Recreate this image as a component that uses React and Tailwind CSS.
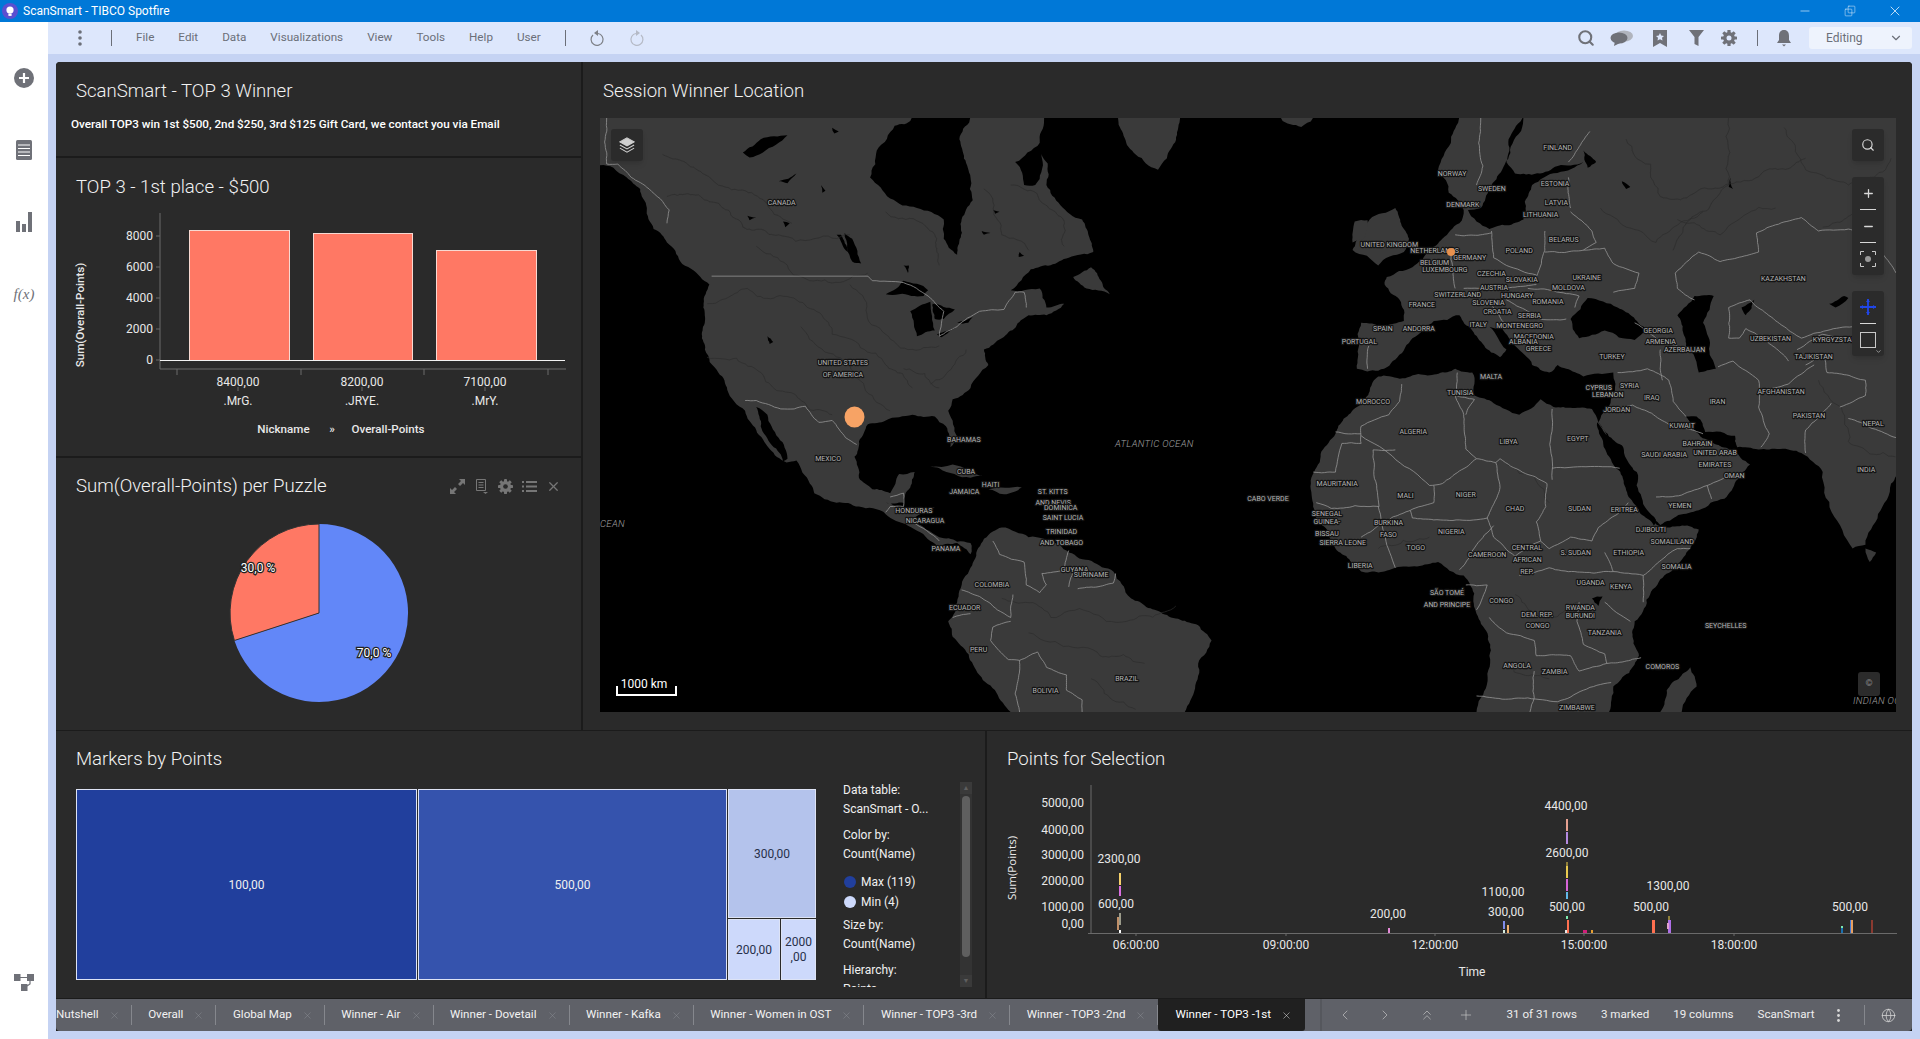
import { ChevronDown, ChevronLeft, ChevronRight, ChevronsUp, Globe, Minus, Plus, Search, Square, X } from 'lucide-react';

const menuItems = [['File', 'ml-[24px]'], ['Edit', 'ml-[24px]'], ['Data', 'ml-[24px]'], ['Visualizations', 'ml-[24px]'], ['View', 'ml-[24px]'], ['Tools', 'ml-[24px]'], ['Help', 'ml-[24px]'], ['User', 'ml-[24px]']];
const tabs = ['Overall', 'Global Map', 'Winner - Air', 'Winner - Dovetail', 'Winner - Kafka', 'Winner - Women in OST', 'Winner - TOP3 -3rd', 'Winner - TOP3 -2nd'];

// coordinates below were read off crops of the map, so each half has its own scale
const westLand = [
  '0,118 30,125 60,150 90,180 105,230 120,285 150,320 180,370 225,410 245,430 232,480 228,560 235,600 265,660 285,705 325,760 350,810 380,860 418,895 440,890 470,950 480,975 530,1000 580,1010 640,1030 690,1060 740,1100 760,1115 800,1105 830,1135 830,1105 800,1102 760,1090 730,1070 700,1040 750,1012 660,1008 640,1000 680,1000 695,960 705,920 670,925 650,975 610,965 580,935 570,880 580,840 600,795 640,785 700,770 750,775 775,800 785,855 802,830 780,760 790,730 830,700 870,640 860,600 900,570 960,510 1000,510 1040,480 1000,490 985,440 950,445 920,445 965,390 1050,360 1105,345 1080,260 1000,170 985,60 995,0 0,0',
  '805,1230 830,1170 880,1075 900,1065 960,1090 1030,1110 1050,1130 1150,1180 1190,1250 1260,1290 1340,1320 1370,1360 1340,1420 1310,1547 920,1547 850,1450 790,1350 780,1310 800,1260',
  '1060,410 1100,385 1142,455 1090,440',
  '1160,0 1300,0 1270,100 1250,130 1200,90',
  '740,905 790,900 860,930 830,935 760,910',
  '870,965 945,960 905,978',
];
const westWater = [
  '605,150 620,80 660,15 700,0 830,0 805,50 830,150 835,210 810,260 800,352 770,310 770,260 710,230 650,205',
  '930,110 985,60 990,100 975,170 950,170',
  '640,455 680,420 735,445 725,460 670,455',
  '695,500 740,475 750,550 710,565',
  '745,480 795,495 770,520 750,520',
  '800,530 835,515 825,530',
  '755,560 800,540 765,568',
  '320,85 360,50 420,40 365,85 335,98',
  '400,160 440,140 420,165',
  '548,295 565,310 585,375 565,370',
  '530,300 540,300 555,345',
  '680,380 692,380 690,400',
  '375,565 388,580 380,585',
  '520,20 535,30 525,35', '495,170 505,185 498,190', '410,265 425,270 415,280', '855,290 875,295 860,300', '880,235 895,240 885,245', '940,345 950,355 938,358', '330,250 350,255 335,262',
  '350,750 375,770 400,830 420,885 410,892 385,850 360,800',
];
const westBorders = [
  '15,0 15,115 40,115 70,150 110,180 155,235 150,270',
  '250,408 600,408',
  '600,408 610,420 680,425 735,460 770,500 760,565 800,540 850,500 905,495 930,450 950,450 955,490',
  '325,733 350,733 405,755 435,755 460,748 490,790 520,785 550,830 575,848',
  '650,985 680,975 680,1010 650,1010 640,1025',
  '700,1050 760,1100',
  '880,1100 895,1135 950,1155 955,1215 985,1235 1000,1215 990,1185 1040,1175 1050,1125',
  '810,1228 850,1245 890,1280 920,1300 925,1240',
  '1050,1220 1060,1180',
  '1070,1225 1150,1210 1155,1185',
  '920,1310 880,1325 875,1360 915,1410 940,1412 980,1390 1000,1430 1045,1450 1045,1490 1080,1515 1080,1547',
  '940,1412 930,1500 940,1547',
  '790,1300 830,1290',
];
const westRivers = [
  '150,200 240,210 320,280 400,300 560,300',
  '240,480 330,440 440,470 520,560 640,640 700,700',
  '450,540 560,640 650,760',
  '240,620 360,660 440,720 520,770',
  '680,650 760,700',
  '140,90 230,140 340,190 430,270',
  '920,170 1020,240 1040,330',
  '640,240 750,300 760,380',
  '860,180 900,300 960,340',
  '560,430 640,560 690,600 760,590',
  '350,330 470,420 600,400',
  '820,600 740,690',
  '900,1250 1010,1300 1180,1310 1290,1270',
  '960,1340 1120,1400 1220,1420',
  '1100,1460 1200,1540',
];
const eastLand = [
  '490,0 470,60 440,130 465,190 500,235 490,270 450,310 420,340 380,385 320,410 315,430 350,470 360,525 260,530 255,590 250,650 300,655 345,620 380,570 430,525 490,510 520,550 585,620 600,600 560,540 590,545 620,590 660,640 700,660 720,640 740,650 780,670 850,660 855,690 835,755 815,790 860,880 890,970 945,1045 960,1058 1050,1020 1110,990 1170,900 1130,862 1090,845 1040,810 1020,775 1040,780 1060,820 1130,830 1140,855 1240,860 1290,870 1340,920 1410,1120 1440,1110 1500,950 1512,930 1512,0',
  '300,670 400,665 480,650 520,660 525,720 570,740 630,770 680,730 710,750 800,755 815,790 860,890 890,975 945,1050 960,1062 1050,1070 1030,1120 960,1200 900,1310 910,1400 850,1480 840,1547 530,1547 560,1400 530,1290 500,1190 440,1155 340,1170 260,1180 200,1120 155,1040 150,920 200,820 250,750 290,680',
  '240,340 280,260 340,230 372,310 360,345 300,380',
  '245,265 275,262 265,310 240,320',
  '70,0 150,0 120,18',
  '1030,1430 1045,1480 1010,1547 960,1547 975,1490',
  '1440,1120 1465,1130 1450,1155',
];
const eastWater = [
  '640,0 605,50 600,110 620,140 720,120 780,110 660,170 640,260 560,285 530,265 510,235 540,230 590,130 610,70',
  '780,80 810,110 790,125',
  '750,520 790,465 860,490 930,550 900,575 830,550 770,570',
  '1000,510 1040,460 1085,460 1060,530 1090,650 1050,660 1020,590',
  '1150,490 1180,470 1160,510',
  '1355,480 1390,460 1400,465 1370,490',
  '800,1250 825,1245 815,1270',
  '870,160 890,175 880,180',
  '812,790 870,850 905,920 950,1045 945,1060 890,990 850,900',
  '1020,775 1045,775 1065,815 1135,825 1130,862 1085,845 1040,810',
  '400,600 420,590 415,620', '490,590 505,580 500,630',
  '1120,175 1125,150 1130,180',
];
const eastBorders = [
  '355,690 350,735 325,770 260,800 260,845 215,845 200,920 148,920',
  '200,815 260,820',
  '260,825 420,955 450,950 530,885',
  '288,862 302,1010 190,1015 155,1000',
  '288,862 340,862',
  '430,955 430,1000 375,1020 380,1040 430,1045 490,1045 555,1040 585,960 575,895 530,885',
  '485,660 480,720 500,770 505,860 530,885',
  '480,720 525,730 505,770',
  '707,755 707,940',
  '575,895 585,885 695,950 692,1010 670,1050 680,1100 700,1120 750,1090 800,1100 815,1065 860,1030 885,1000',
  '707,910 865,910',
  '555,1040 570,1090 620,1140 680,1100',
  '490,1175 530,1110 570,1060',
  '830,1130 850,1180 920,1190 1000,1120 1030,1120',
  '920,1190 920,1260',
  '830,1260 890,1310',
  '770,1260 765,1310 780,1370 830,1395 835,1420 770,1440 750,1400 670,1400 665,1360 600,1340 560,1300',
  '630,1190 700,1170 760,1180 850,1180',
  '530,1505 650,1510 720,1520 780,1490 845,1470',
  '665,1440 665,1510 655,1547',
  '835,1420 915,1405',
  '300,1010 340,1170',
  '260,1090 300,1060 375,1020',
  '505,1215 555,1215 530,1280',
  '860,660 930,650 980,680 990,735 1020,775',
  '840,760 895,745 980,795 1060,820',
  '950,985 1010,980 1070,955 1080,990',
  '1070,955 1130,925',
  '1095,645 1130,630 1190,680 1190,750 1215,820 1195,855',
  '1190,710 1260,690 1320,640',
  '1360,740 1300,810 1300,870',
  '960,600 965,680',
  '900,530 960,580 1000,590',
  '995,400 1050,345 1100,370 1190,345 1185,295 1290,255 1330,290 1400,285 1440,300 1512,400',
  '995,400 1000,440 1040,470',
  '1120,490 1170,470 1250,540 1290,570 1350,550 1410,540',
  '1120,490 1120,570 1145,570 1160,545 1200,570 1260,630',
  '1280,600 1340,560 1410,570',
  '1300,640 1340,610 1350,660 1440,680 1440,720 1380,750',
  '1400,780 1512,830',
  '540,0 535,60 545,120 530,170',
  '795,30 770,70 745,110',
  '745,150 750,230',
  '690,290 690,340 670,410',
  '750,240 800,290 810,320 780,340 690,345',
  '780,340 830,335 850,375 910,400 900,440 850,450',
  '565,290 570,360 600,380 670,405',
  '480,300 565,295',
  '470,340 480,440',
  '500,440 570,440 670,430',
  '600,470 650,500 680,520 740,520',
  '650,440 770,460 760,490',
  '278,590 275,650',
  '560,470 600,540',
];
const eastRivers = [
  '880,50 960,200 1080,180 1210,130 1300,100',
  '1000,260 1100,300 1230,230',
  '820,230 950,320 1060,240',
  '1120,0 1120,170 1040,250 990,340',
  '1250,20 1300,130 1400,170 1500,100',
  '1340,280 1420,230',
  '600,900 700,1000',
  '1330,680 1400,840 1510,880',
  '620,1240 700,1300 770,1260',
  '600,1420 700,1460',
  '300,1120 420,1090',
];

const noise = (x, y) => {
  const n = Math.sin(x * 12.9898 + y * 78.233) * 43758.5453;
  return (n - Math.floor(n)) * 2 - 1;
};

// midpoint displacement, the hand-read outlines are too straight otherwise
function roughen(str, amp, closed, edge) {
  let pts = str.split(' ').map((p) => p.split(',').map(Number));
  const onEdge = (a, b) => a[1] === b[1] && (a[1] === 0 || a[1] === 1547) || a[0] === b[0] && (a[0] === 0 || a[0] === edge);
  for (let round = 0; round < 4; round++) {
    const next = [];
    pts.forEach((a, i) => {
      next.push(a);
      const b = pts[i + 1] || (closed ? pts[0] : null);
      if (!b || onEdge(a, b)) return;
      const dx = b[0] - a[0];
      const dy = b[1] - a[1];
      if (Math.hypot(dx, dy) < 10) return;
      const k = noise(a[0] + b[0], a[1] - b[1]) * amp;
      next.push([(a[0] + b[0]) / 2 - dy * k, (a[1] + b[1]) / 2 + dx * k]);
    });
    pts = next;
  }
  // the top row sits 2px under the map's edge, push it past so no black line shows
  return pts.map((p) => `${p[0].toFixed(1)},${p[1] === 0 ? -10 : p[1].toFixed(1)}`).join(' ');
}

const westShapes = {
  land: westLand.map((p) => roughen(p, 0.1, true, 1568)),
  water: westWater.map((p) => roughen(p, 0.1, true, 1568)),
  rivers: westRivers.map((p) => roughen(p, 0.16, false, 1568)),
  borders: westBorders.map((p, i) => (i === 1 ? p : roughen(p, 0.05, false, 1568))),
};
const eastShapes = {
  land: eastLand.map((p) => roughen(p, 0.1, true, 1512)),
  water: eastWater.map((p) => roughen(p, 0.1, true, 1512)),
  rivers: eastRivers.map((p) => roughen(p, 0.16, false, 1512)),
  borders: eastBorders.map((p) => roughen(p, 0.05, false, 1512)),
};

const westLabels = [
  ['CANADA', 407, 215], ['UNITED STATES', 544, 633], ['OF AMERICA', 544, 664], ['MEXICO', 511, 884], ['BAHAMAS', 815, 834], ['CUBA', 820, 918], ['HAITI', 875, 953], ['JAMAICA', 816, 970], ['ST. KITTS', 1014, 970], ['AND NEVIS', 1015, 1000], ['DOMINICA', 1032, 1013], ['SAINT LUCIA', 1037, 1038], ['TRINIDAD', 1034, 1075], ['AND TOBAGO', 1034, 1105], ['HONDURAS', 703, 1020], ['NICARAGUA', 728, 1046], ['PANAMA', 775, 1120], ['COLOMBIA', 878, 1214], ['GUYANA', 1063, 1174], ['SURINAME', 1100, 1188], ['ECUADOR', 817, 1273], ['PERU', 848, 1383], ['BOLIVIA', 998, 1492], ['BRAZIL', 1180, 1460],
];
const eastLabels = [
  ['FINLAND', 720, 73], ['NORWAY', 473, 140], ['SWEDEN', 566, 179], ['ESTONIA', 714, 165], ['LATVIA', 717, 216], ['DENMARK', 498, 220], ['LITHUANIA', 680, 247], ['BELARUS', 734, 311], ['UNITED KINGDOM', 326, 326], ['NETHERLANDS', 432, 342], ['POLAND', 630, 340], ['GERMANY', 514, 360], ['BELGIUM', 432, 372], ['LUXEMBOURG', 456, 390], ['CZECHIA', 565, 402], ['SLOVAKIA', 636, 416], ['UKRAINE', 788, 412], ['AUSTRIA', 571, 437], ['MOLDOVA', 745, 437], ['SWITZERLAND', 486, 457], ['HUNGARY', 625, 458], ['ROMANIA', 697, 475], ['SLOVENIA', 558, 478], ['FRANCE', 402, 482], ['CROATIA', 579, 501], ['SERBIA', 654, 512], ['ITALY', 534, 535], ['MONTENEGRO', 631, 538], ['SPAIN', 311, 546], ['ANDORRA', 395, 546], ['GEORGIA', 955, 551], ['MACEDONIA', 664, 565], ['ALBANIA', 640, 580], ['PORTUGAL', 256, 580], ['ARMENIA', 961, 579], ['GREECE', 675, 597], ['AZERBAIJAN', 1017, 599], ['TURKEY', 847, 617], ['KAZAKHSTAN', 1248, 414], ['UZBEKISTAN', 1218, 570], ['KYRGYZSTAN', 1368, 573], ['TAJIKISTAN', 1319, 618], ['MALTA', 564, 670], ['CYPRUS', 816, 700], ['SYRIA', 888, 693], ['LEBANON', 837, 717], ['TUNISIA', 492, 712], ['IRAQ', 940, 724], ['MOROCCO', 288, 735], ['IRAN', 1094, 735], ['AFGHANISTAN', 1243, 709], ['JORDAN', 858, 756], ['PAKISTAN', 1308, 771], ['NEPAL', 1458, 793], ['KUWAIT', 1011, 798], ['ALGERIA', 382, 813], ['EGYPT', 767, 832], ['LIBYA', 605, 839], ['BAHRAIN', 1047, 845], ['UNITED ARAB', 1088, 869], ['SAUDI ARABIA', 969, 875], ['EMIRATES', 1088, 900], ['INDIA', 1442, 914], ['OMAN', 1133, 930], ['MAURITANIA', 204, 950], ['NIGER', 505, 979], ['MALI', 364, 981], ['CABO VERDE', 42, 989], ['YEMEN', 1006, 1007], ['CHAD', 620, 1015], ['SUDAN', 771, 1014], ['ERITREA', 876, 1018], ['SENEGAL', 180, 1028], ['GUINEA-', 180, 1050], ['BURKINA', 324, 1052], ['DJIBOUTI', 938, 1070], ['NIGERIA', 471, 1075], ['BISSAU', 180, 1080], ['FASO', 324, 1083], ['SOMALILAND', 988, 1101], ['SIERRA LEONE', 217, 1104], ['TOGO', 388, 1118], ['CENTRAL', 648, 1118], ['S. SUDAN', 762, 1130], ['ETHIOPIA', 886, 1131], ['CAMEROON', 555, 1136], ['AFRICAN', 649, 1149], ['LIBERIA', 258, 1164], ['SOMALIA', 998, 1167], ['REP.', 648, 1179], ['UGANDA', 797, 1209], ['KENYA', 868, 1218], ['SÃO TOMÉ', 461, 1234], ['CONGO', 588, 1256], ['AND PRINCIPE', 461, 1265], ['RWANDA', 773, 1274], ['DEM. REP.', 672, 1291], ['BURUNDI', 773, 1296], ['CONGO', 673, 1321], ['SEYCHELLES', 1113, 1322], ['TANZANIA', 830, 1340], ['ANGOLA', 625, 1425], ['COMOROS', 965, 1429], ['ZAMBIA', 713, 1442], ['ZIMBABWE', 765, 1534],
];
const oceanLabels = [
  ['ATLANTIC OCEAN', 515, 329], ['CEAN', 0, 409], ['INDIAN OCEAN', 1253, 586],
];

const barLabels = [
  ['8400,00', '.MrG.', 238], ['8200,00', '.JRYE.', 362], ['7100,00', '.MrY.', 485],
];
const yTicks = [['8000', 236], ['6000', 267], ['4000', 298], ['2000', 329], ['0', 360]];
const pointTicks = [['5000,00', 803], ['4000,00', 830], ['3000,00', 855], ['2000,00', 881], ['1000,00', 907], ['0,00', 924]];
const timeTicks = [['06:00:00', 1136], ['09:00:00', 1286], ['12:00:00', 1435], ['15:00:00', 1584], ['18:00:00', 1734]];
const pointLabels = [
  ['2300,00', 1119, 859], ['600,00', 1116, 904], ['200,00', 1388, 914], ['1100,00', 1503, 892], ['300,00', 1506, 912], ['4400,00', 1566, 806], ['2600,00', 1567, 853], ['500,00', 1567, 907], ['500,00', 1651, 907], ['1300,00', 1668, 886], ['500,00', 1850, 907],
];
const spikes = [
  [1119, 873, 12, '#f5d06a'], [1119, 886, 10, '#d96fe0'], [1117, 917, 13, '#c08f68'], [1119, 913, 12, '#9b9b8a'], [1119, 930, 3, '#ffffff'],
  [1388, 928, 5, '#e58ad8'],
  [1503, 921, 8, '#7f8ce8'], [1503, 930, 3, '#d8efe0'], [1507, 925, 8, '#f0b070'],
  [1566, 819, 12, '#e5a090'], [1566, 832, 12, '#b48ae0'], [1566, 862, 4, '#8f7f3a'], [1566, 866, 12, '#eacb50'], [1566, 879, 12, '#d765d8'], [1566, 892, 7, '#62b8e8'], [1566, 916, 3, '#7ce8b0'], [1567, 920, 13, '#ff7050'], [1565, 930, 3, '#e8e8e8'],
  [1583, 930, 3, '#d0207a'], [1585, 930, 3, '#d0207a'], [1591, 930, 3, '#e8a030'],
  [1652, 920, 13, '#ff7050'], [1653, 920, 13, '#ff7050'],
  [1668, 916, 4, '#8f7f3a'], [1668, 920, 13, '#b070e8'], [1669, 920, 13, '#b070e8'], [1667, 923, 6, '#e0a0d0'],
  [1841, 928, 5, '#1a70b0'], [1841, 926, 2, '#7ce8b0'], [1850, 920, 13, '#3f78d8'], [1851, 920, 13, '#e8a060'], [1871, 920, 13, '#8a3a30'],
];
const legendRows = [
  ['Data table:', 'mt-0'], ['ScanSmart - O...', 'mt-[3px]'], ['Color by:', 'mt-[10px]'], ['Count(Name)', 'mt-[3px]'],
];
const legendRowsAfter = [
  ['Size by:', 'mt-[7px]'], ['Count(Name)', 'mt-[3px]'], ['Hierarchy:', 'mt-[10px]'], ['Points', 'mt-[3px]'],
];

function PolySet({ items, ...rest }) {
  return items.map((p, i) => <polygon key={i} points={p} vectorEffect="non-scaling-stroke" {...rest} />);
}
function LineSet({ items, ...rest }) {
  return items.map((p, i) => <polyline key={i} points={p} fill="none" vectorEffect="non-scaling-stroke" {...rest} />);
}

function MapLayer({ shapes, transform }) {
  return (
    <g transform={transform}>
      <PolySet items={shapes.land} fill="#3a3a3a" />
      <PolySet items={shapes.water} fill="#000000" />
      <LineSet items={shapes.rivers} stroke="#2c2c2c" strokeWidth=".7" />
      <LineSet items={shapes.borders} stroke="#969696" strokeWidth=".8" />
    </g>
  );
}

function PlaceLabel({ text, x, y }) {
  return (
    <text x={x} y={y} dy="2.5" textAnchor="middle" fontSize="7" fill="#b4b4b4" stroke="#141414" strokeWidth="2.4" strokeLinejoin="round" className="[paint-order:stroke]">
      {text}
    </text>
  );
}

function WorldMap() {
  return (
    <svg viewBox="0 0 1296 594" className="block h-full w-full">
      <rect width="1296" height="594" fill="#000000" />
      <MapLayer shapes={westShapes} transform="translate(0 2) scale(.4464 .3827)" />
      <MapLayer shapes={eastShapes} transform="translate(650 2) scale(.4274 .3827)" />
      {westLabels.map(([t, x, y], i) => <PlaceLabel key={i} text={t} x={x / 2.24} y={y / 2.613 + 2} />)}
      {eastLabels.map(([t, x, y], i) => <PlaceLabel key={i} text={t} x={650 + x / 2.34} y={y / 2.613 + 2} />)}
      {oceanLabels.map(([t, x, y], i) => (
        <text key={i} x={x} y={y} fontSize="9.6" fontStyle="italic" fontWeight="300" fill="#a0a0a0" letterSpacing=".3">{t}</text>
      ))}
      <ellipse cx="254.500" cy="299" rx="10" ry="10.500" fill="#f7a365" />
      <circle cx="851" cy="134" r="4" fill="#e8914f" />
      <path d="M17 568v9h59v-9" fill="none" stroke="#ffffff" strokeWidth="2" />
      <text x="44" y="570" textAnchor="middle" fontSize="12" fill="#ffffff">1000 km</text>
    </svg>
  );
}

function MapButton({ className, children }) {
  return <div className={`absolute flex w-8 flex-col items-center rounded-[3px] bg-[#2b2b2b] text-[#d8d8d8] shadow-md ${className}`}>{children}</div>;
}

function Gear({ size = 16, className = '' }) {
  const teeth = [0, 45, 90, 135];
  return (
    <svg width={size} height={size} viewBox="0 0 16 16" className={className}>
      <circle cx="8" cy="8" r="4.300" fill="none" stroke="currentColor" strokeWidth="3.200" />
      {teeth.map((a) => <rect key={a} x="6.400" y="0" width="3.200" height="16" rx=".5" fill="currentColor" transform={`rotate(${a} 8 8)`} />)}
      <circle cx="8" cy="8" r="2.500" fill="var(--gear-hole)" />
    </svg>
  );
}

function BarChart() {
  return (
    <svg viewBox="56 198 525 258" className="block h-[258px] w-[525px]" fill="#e8e8e8" fontSize="12">
      <path d="M160 213V369H566M177 369v6M301 369v6M424 369v6M548 369v6M238 387v4M362 387v4M485 387v4" fill="none" stroke="#6a6a6a" />
      {yTicks.map(([t, y]) => (
        <g key={t}>
          <path d={`M156 ${y}h4`} stroke="#6a6a6a" />
          <text x="153" y={y + 4} textAnchor="end">{t}</text>
        </g>
      ))}
      <rect x="189.5" y="230.5" width="100" height="130" fill="#ff7864" stroke="#f7d9d2" />
      <rect x="313.5" y="233.5" width="99" height="127" fill="#ff7864" stroke="#f7d9d2" />
      <rect x="436.5" y="250.5" width="100" height="110" fill="#ff7864" stroke="#f7d9d2" />
      <path d="M160 360.5H565" stroke="#f2f2f2" />
      {barLabels.map(([v, n, x]) => (
        <g key={n} textAnchor="middle">
          <text x={x} y="386">{v}</text>
          <text x={x} y="405">{n}</text>
        </g>
      ))}
      <g fontSize="11.6" fontWeight="500">
        <text x="283.5" y="433" textAnchor="middle">Nickname</text>
        <text x="332" y="433" textAnchor="middle">»</text>
        <text x="388" y="433" textAnchor="middle">Overall-Points</text>
        <text transform="translate(84 315) rotate(-90)" textAnchor="middle">Sum(Overall-Points)</text>
      </g>
    </svg>
  );
}

function PieChart() {
  const outline = 'fill-white stroke-[#222222] [paint-order:stroke] [stroke-width:2.5px]';
  return (
    <svg viewBox="56 498 525 232" className="block h-[232px] w-[525px]" fontSize="12">
      <path d="M319 613V524A89 89 0 1 1 234.4 640.5Z" fill="#6287f8" />
      <path d="M319 613L234.4 640.5A89 89 0 0 1 319 524Z" fill="#ff7864" stroke="#333333" />
      <text x="258" y="572" textAnchor="middle" className={outline}>30,0 %</text>
      <text x="374" y="657" textAnchor="middle" className={outline}>70,0 %</text>
    </svg>
  );
}

function PointsChart() {
  return (
    <svg viewBox="987 771 925 228" className="block h-[228px] w-[925px]" fill="#e8e8e8" fontSize="12">
      <path d="M1091 785V933M1088 933.5H1897" fill="none" stroke="#6a6a6a" />
      {timeTicks.map(([t, x]) => (
        <g key={t}>
          <path d={`M${x} 933v3`} stroke="#6a6a6a" />
          <text x={x} y="949" textAnchor="middle">{t}</text>
        </g>
      ))}
      {pointTicks.map(([t, y]) => <text key={t} x="1084" y={y + 4} textAnchor="end">{t}</text>)}
      {spikes.map(([x, y, h, c], i) => <rect key={i} x={x} y={y} width="2" height={h} fill={c} />)}
      {pointLabels.map(([t, x, y], i) => <text key={i} x={x} y={y + 4} textAnchor="middle">{t}</text>)}
      <text x="1472" y="976" textAnchor="middle">Time</text>
      <text transform="translate(1016 868) rotate(-90)" textAnchor="middle" fontWeight="500" className="font-['Open_Sans',sans-serif]" fontSize="11.5">Sum(Points)</text>
    </svg>
  );
}

function Title({ children }) {
  return <h2 className="text-[18.6px] leading-6 font-light text-[#f2f2f2]">{children}</h2>;
}

function Tab({ label, first }) {
  return (
    <div className={`flex h-5 shrink-0 items-center border-r border-[#85878d] pr-[11px] ${first ? 'pl-0' : 'pl-[16.5px]'}`}>
      <span>{label}</span>
      <X size={11} strokeWidth={1} className="ml-[10px] text-[#8f9197]" />
    </div>
  );
}

export default function App() {
  return (
    <div className="flex h-screen w-screen flex-col overflow-hidden bg-white font-[Roboto,sans-serif]">
      {/* window title bar */}
      <div className="flex h-[22px] shrink-0 items-center bg-[#0078d7] text-white">
        <svg width="16" height="16" viewBox="0 0 16 16" className="ml-[2px]">
          <circle cx="8" cy="8" r="8" fill="#5b4fd0" />
          <circle cx="8" cy="7" r="3.6" fill="#ffffff" />
          <rect x="6.4" y="10.5" width="3.2" height="2.4" fill="#ffffff" />
        </svg>
        <span className="ml-[5px] text-[12px]">ScanSmart - TIBCO Spotfire</span>
        <div className="ml-auto flex items-center">
          <Minus size={14} strokeWidth={1} />
          <div className="relative ml-[31px] h-[14px] w-[14px]">
            <Square size={9} strokeWidth={1.2} className="absolute bottom-[1px] left-[1px]" />
            <Square size={9} strokeWidth={1.2} className="absolute top-[1px] right-[1px]" />
          </div>
          <X size={16} strokeWidth={1.1} className="mr-[17px] ml-[30px]" />
        </div>
      </div>

      <div className="flex min-h-0 flex-1">
        {/* left rail */}
        <div className="flex w-12 shrink-0 flex-col items-center gap-[52px] pt-[46px] text-[#6f7178]">
          <svg width="20" height="20" viewBox="0 0 20 20" className="shrink-0">
            <circle cx="10" cy="10" r="10" fill="#6f7178" />
            <path d="M10 5v10M5 10h10" stroke="#ffffff" strokeWidth="2.2" />
          </svg>
          <svg width="16" height="20" viewBox="0 0 16 20" className="shrink-0">
            <rect width="16" height="20" rx="1.5" fill="#6f7178" />
            <path d="M2 5h12M2 8.5h12M2 12h12M2 15.5h12" stroke="#ffffff" strokeWidth="1.2" />
          </svg>
          <svg width="16" height="20" viewBox="0 0 16 20" className="shrink-0">
            <path d="M0 9h4v11H0zM6 12h4v8H6zM12 0h4v20h-4z" fill="#6f7178" />
          </svg>
          <span className="h-5 font-['Liberation_Serif',serif] text-[15px] leading-5 italic">f(x)</span>
          <svg width="20" height="20" viewBox="0 0 20 20" className="mt-auto mb-[45px] shrink-0">
            <path d="M0 0h6.5v7H0zM13 0h7v7h-7zM7 10h6.5v7H7z" fill="#6f7178" />
            <path d="M6 3.5h7M16 7v3l-3 2" fill="none" stroke="#6f7178" strokeWidth="1.2" />
          </svg>
        </div>

        <div className="flex min-w-0 flex-1 flex-col bg-[#c5d3f3]">
          {/* toolbar */}
          <div className="flex h-8 shrink-0 items-center bg-[#dde7fc] text-[11.7px] text-[#6b6f78] [--gear-hole:#dde7fc]">
            <svg width="4" height="16" viewBox="0 0 4 16" className="ml-[30px]" fill="#6b6f78">
              <circle cx="2" cy="2" r="1.8" /><circle cx="2" cy="8" r="1.8" /><circle cx="2" cy="14" r="1.8" />
            </svg>
            <div className="ml-[29px] h-4 w-px bg-[#6b6f78]" />
            {menuItems.map(([m, ml]) => <span key={m} className={ml}>{m}</span>)}
            <div className="ml-[24px] h-4 w-px bg-[#6b6f78]" />
            <svg width="16" height="18" viewBox="0 0 16 18" className="ml-[23px]" fill="none" stroke="#7d8087" strokeWidth="1.2">
              <path d="M4 6a6 6 0 1 0 5-1.5" /><path d="M9 1v6L5 4z" fill="#7d8087" stroke="none" />
            </svg>
            <svg width="16" height="18" viewBox="0 0 16 18" className="ml-[24px]" fill="none" stroke="#b5bac6" strokeWidth="1.2">
              <path d="M12 6a6 6 0 1 1-5-1.5" /><path d="M7 1v6l4-3z" fill="#b5bac6" stroke="none" />
            </svg>

            <div className="ml-auto flex items-center text-[#6f7178]">
              <Search size={18} strokeWidth={2.8} />
              <svg width="24" height="16" viewBox="0 0 24 16" className="ml-[15px]">
                <ellipse cx="14" cy="6" rx="9" ry="5.5" fill="#b0b4bd" />
                <ellipse cx="9" cy="8" rx="8.5" ry="5.5" fill="#6f7178" />
                <path d="M5 11l-1 5 6-3z" fill="#6f7178" />
              </svg>
              <svg width="14" height="17" viewBox="0 0 14 17" className="ml-[19px]">
                <path d="M0 0h14v17l-7-4-7 4z" fill="#6f7178" />
                <path d="M7 3l1.2 2.6 2.8.3-2 1.9.5 2.8L7 9.2l-2.5 1.4.5-2.8-2-1.9 2.8-.3z" fill="#dde7fc" />
              </svg>
              <svg width="15" height="16" viewBox="0 0 15 16" className="ml-[22px]">
                <path d="M0 0h15L9.5 7v9l-4-2V7z" fill="#6f7178" />
              </svg>
              <Gear size={16} className="ml-[17px]" />
              <div className="ml-[20px] h-4 w-px bg-[#6b6f78]" />
              <svg width="14" height="17" viewBox="0 0 14 17" className="ml-[19px]">
                <path d="M7 0c3.5 0 5 2.5 5 6v4l2 3H0l2-3V6c0-3.500 1.500-6 5-6zM5 14.500h4L7 16.500z" fill="#6f7178" />
              </svg>
              <div className="mr-2 ml-[18px] flex h-[22px] w-[103px] items-center rounded-[3px] bg-[#eef3fd] pr-[9px] pl-[17px] text-[12px] text-[#6b6f78]">
                Editing
                <ChevronDown size={14} className="ml-auto" />
              </div>
            </div>
          </div>

          {/* page */}
          <div className="flex min-h-0 flex-1 flex-col p-2">
            <div className="flex min-h-0 flex-1 flex-col gap-[1px] overflow-hidden rounded-t-[4px] bg-[#1b1b1b] text-[#f0f0f0]">
              <div className="flex h-[668px] shrink-0 gap-[2px]">
                <div className="flex w-[525px] shrink-0 flex-col gap-[2px]">
                  <section className="h-[94px] bg-[#2a2a2a]">
                    <div className="pt-[17px] pl-5"><Title>ScanSmart - TOP 3 Winner</Title></div>
                    <p className="mt-[13px] pl-[15px] text-[11.7px] leading-4 font-medium text-white">Overall TOP3 win 1st $500, 2nd $250, 3rd $125 Gift Card, we contact you via Email</p>
                  </section>
                  <section className="h-[298px] overflow-hidden bg-[#2a2a2a]">
                    <div className="-mb-px pt-[17px] pl-5"><Title>TOP 3 - 1st place - $500</Title></div>
                    <BarChart />
                  </section>
                  <section className="min-h-0 flex-1 overflow-hidden bg-[#2a2a2a] [--gear-hole:#2a2a2a]">
                    <div className="flex items-center pt-4 pr-5 pl-5">
                      <Title>Sum(Overall-Points) per Puzzle</Title>
                      <div className="ml-auto flex items-center gap-[9px] text-[#767676]">
                        <svg width="15" height="15" viewBox="0 0 15 15" fill="currentColor"><path d="M9 0h6v6l-2-2-3 3-2-2 3-3zM0 15V9l2 2 3-3 2 2-3 3 2 2z" /></svg>
                        <svg width="15" height="15" viewBox="0 0 15 15" fill="none" stroke="currentColor"><path d="M2.500.5h9v11h-9zM4.500 3.500h5M4.500 6h5M4.500 8.500h5" /><path d="M9 13h5l-2.500 2z" fill="currentColor" stroke="none" /></svg>
                        <Gear size={15} />
                        <svg width="15" height="15" viewBox="0 0 15 15" fill="currentColor"><path d="M0 2h2v2H0zM4 2h11v2H4zM0 6.500h2v2H0zM4 6.500h11v2H4zM0 11h2v2H0zM4 11h11v2H4z" /></svg>
                        <X size={15} strokeWidth={2} />
                      </div>
                    </div>
                    <PieChart />
                  </section>
                </div>

                <section className="min-w-0 flex-1 bg-[#2a2a2a] pt-[17px] pl-[17px]">
                  <div className="mb-[15px] pl-[3px]"><Title>Session Winner Location</Title></div>
                  <div className="relative h-[594px] w-[1296px]">
                    <WorldMap />
                    <MapButton className="top-[11px] left-[11px] h-8 justify-center"><svg width="16" height="16" viewBox="0 0 18 18" fill="none" stroke="#d0d0d0" strokeWidth="1.2"><path d="M9 1l8 4.500-8 4.500-8-4.500z" fill="#d0d0d0" /><path d="M1 9l8 4.500L17 9M1 12.500L9 17l8-4.500" /></svg></MapButton>
                    <MapButton className="top-[11px] right-[12px] h-8 justify-center"><Search size={14} strokeWidth={2} /></MapButton>
                    <MapButton className="top-[59px] right-[12px] h-[98px] pt-[10px]">
                      <Plus size={13} strokeWidth={2.4} />
                      <div className="mt-[9px] h-px w-4 bg-[#d8d8d8]" />
                      <Minus size={13} strokeWidth={2.4} className="mt-[10px]" />
                      <div className="mt-[9px] h-px w-4 bg-[#d8d8d8]" />
                      <svg width="16" height="16" viewBox="0 0 16 16" className="mt-[8px]" fill="none" stroke="#c8c8c8"><path d="M.5 4V.5h3.500M12 .5h3.500V4M15.500 12v3.500H12M4 15.500H.5V12" /><circle cx="8" cy="8" r="3" fill="#9a9a9a" stroke="none" /></svg>
                    </MapButton>
                    <MapButton className="top-[173px] right-[12px] h-[65px] pt-2">
                      <svg width="16" height="16" viewBox="0 0 16 16" fill="none" stroke="#2046e8" strokeWidth="1.8"><path d="M8 0v16M0 8h16" /><path d="M8 0l-2 3h4zM8 16l-2-3h4zM0 8l3-2v4zM16 8l-3-2v4z" fill="#2046e8" stroke="none" /></svg>
                      <div className="mt-2 h-px w-4 bg-[#d8d8d8]" />
                      <div className="mt-2 h-4 w-4 border border-[#c8c8c8]" />
                      <ChevronDown size={7} className="absolute right-[2px] bottom-[1px]" />
                    </MapButton>
                    <div className="absolute right-[16px] bottom-[16px] flex h-6 w-[22px] items-center justify-center rounded-[3px] bg-[#2b2b2b] text-[9px] text-[#8a8a8a]">©</div>
                  </div>
                </section>
              </div>

              <div className="flex min-h-0 flex-1 gap-[2px]">
                <section className="flex w-[929px] shrink-0 flex-col bg-[#2a2a2a] pt-4 pl-5">
                  <Title>Markers by Points</Title>
                  <div className="mt-[11px] flex items-start">
                    <div className="mt-[7px] flex h-[191px] w-[740px] shrink-0 gap-px text-[12px]">
                      <div className="flex w-[341px] items-center justify-center border border-[#dde3f5] bg-[#213f9d] text-[#f0f0f0]">100,00</div>
                      <div className="flex w-[309px] items-center justify-center border border-[#dde3f5] bg-[#3553ad] text-[#f0f0f0]">500,00</div>
                      <div className="flex min-w-0 flex-1 flex-col gap-px text-[#27304a]">
                        <div className="flex h-[129px] items-center justify-center border border-[#dde3f5] bg-[#b4c3ec]">300,00</div>
                        <div className="flex min-h-0 flex-1 gap-px">
                          <div className="flex w-[52px] items-center justify-center border border-[#dde3f5] bg-[#cdd9fb]">200,00</div>
                          <div className="flex min-w-0 flex-1 items-center justify-center border border-[#dde3f5] bg-[#cdd9fb] text-center leading-[15px]">2000<br />,00</div>
                        </div>
                      </div>
                    </div>
                    <div className="ml-[27px] h-[205px] w-[117px] shrink-0 overflow-hidden text-[12px] leading-4 text-[#f0f0f0]">
                      {legendRows.map(([t, mt]) => <p key={t} className={mt}>{t}</p>)}
                      <div className="mt-[12px] flex items-center"><span className="mr-[5px] ml-px h-3 w-3 rounded-full bg-[#213f9d]" />Max (119)</div>
                      <div className="mt-[4px] flex items-center"><span className="mr-[5px] ml-px h-3 w-3 rounded-full bg-[#cdd9fb]" />Min (4)</div>
                      {legendRowsAfter.map(([t, mt]) => <p key={t} className={mt}>{t}</p>)}
                    </div>
                    <div className="flex h-[205px] w-3 shrink-0 flex-col items-center bg-[#333333] text-[#5f5f5f]">
                      <div className="flex h-3 w-3 items-center justify-center bg-[#3a3a3a] text-[7px]">▲</div>
                      <div className="mt-[2px] h-[161px] w-2 rounded bg-[#5f5f5f]" />
                      <div className="mt-auto flex h-3 w-3 items-center justify-center bg-[#3a3a3a] text-[7px]">▼</div>
                    </div>
                  </div>
                </section>
                <section className="min-w-0 flex-1 bg-[#2a2a2a]">
                  <div className="pt-4 pl-5"><Title>Points for Selection</Title></div>
                  <PointsChart />
                </section>
              </div>

              {/* sheet tabs */}
              <div className="flex h-8 shrink-0 items-center overflow-hidden rounded-b-[4px] bg-[#5f6168] text-[11.6px] whitespace-nowrap text-[#f2f2f2]">
                <Tab label="Nutshell" first />
                {tabs.map((t) => <Tab key={t} label={t} />)}
                <div className="flex h-8 w-[147px] shrink-0 items-center rounded-b-[3px] bg-[#202020] pl-[17px] text-white">
                  Winner - TOP3 -1st
                  <X size={11} strokeWidth={1} className="ml-[10px]" />
                </div>
                <div className="ml-[15px] flex h-8 min-w-0 flex-1 items-center border-l-2 border-[#55575d] text-[#eeeeee]">
                  <ChevronLeft size={16} strokeWidth={1} className="ml-[15px] text-[#c8c8c8]" />
                  <ChevronRight size={16} strokeWidth={1} className="ml-[24px] text-[#c8c8c8]" />
                  <ChevronsUp size={16} strokeWidth={1} className="ml-[26px] text-[#c8c8c8]" />
                  <Plus size={16} strokeWidth={1} className="ml-[23px] text-[#c8c8c8]" />
                  <span className="ml-[32px]">31 of 31 rows</span>
                  <span className="ml-[24px]">3 marked</span>
                  <span className="ml-[24px]">19 columns</span>
                  <span className="ml-[24px]">ScanSmart</span>
                  <svg width="3" height="13" viewBox="0 0 3 13" className="ml-[22px]" fill="#d8d8d8"><circle cx="1.500" cy="1.500" r="1.400" /><circle cx="1.500" cy="6.500" r="1.400" /><circle cx="1.500" cy="11.500" r="1.400" /></svg>
                  <div className="ml-[24px] h-5 w-px bg-[#85878d]" />
                  <Globe size={15} strokeWidth={1.2} className="ml-[16px] text-[#d8d8d8]" />
                </div>
              </div>
            </div>
          </div>
        </div>
      </div>
    </div>
  );
}
